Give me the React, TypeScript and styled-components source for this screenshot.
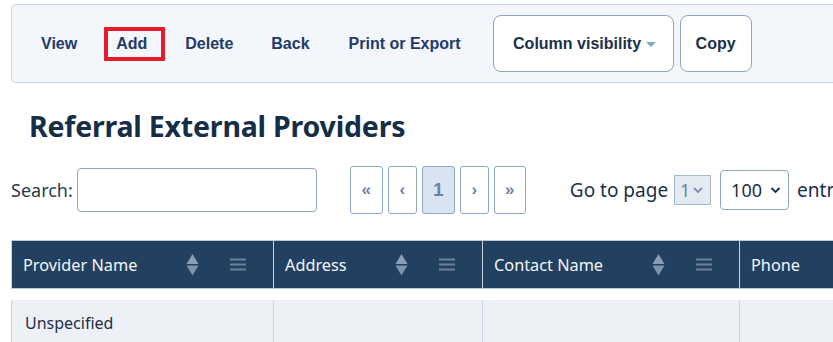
import React from "react";
import styled, { createGlobalStyle } from "styled-components";

const Global = createGlobalStyle`
  html, body { margin: 0; padding: 0; background: #ffffff; overflow: hidden; }
  body { font-family: "Noto Sans", "Open Sans", sans-serif; }
`;

const Page = styled.div`
  width: 833px;
  height: 342px;
  overflow: hidden;
  padding: 4px 0 0 11px;
  box-sizing: border-box;
`;

const Toolbar = styled.div`
  width: 860px;
  height: 79px;
  box-sizing: border-box;
  border: 1px solid #c9d6e6;
  border-radius: 5px;
  background: #f3f6fb;
  display: flex;
  align-items: center;
  padding-left: 10px;
`;

const ToolLink = styled.button<{ $boxed?: boolean }>`
  font-family: "Liberation Sans", Arial, sans-serif;
  font-weight: bold;
  font-size: 16px;
  color: #1f3a6a;
  background: transparent;
  border: ${(p) => (p.$boxed ? "4px solid #e21d25" : "none")};
  padding: ${(p) => (p.$boxed ? "4px 14px 4px 8px" : "8px 19px")};
  cursor: pointer;
  line-height: 18px;
  flex: none;
`;

const OutlineButton = styled.button<{ $w: number }>`
  font-family: "Liberation Sans", Arial, sans-serif;
  font-weight: bold;
  font-size: 16px;
  color: #1c2f4a;
  background: #ffffff;
  border: 1px solid #8fa5c0;
  border-radius: 8px;
  height: 57px;
  width: ${(p) => p.$w}px;
  display: flex;
  align-items: center;
  justify-content: center;
  gap: 5px;
  margin-right: 6px;
  padding: 0;
  flex: none;
`;

const Caret = styled.span`
  width: 0;
  height: 0;
  border-left: 5px solid transparent;
  border-right: 5px solid transparent;
  border-top: 5px solid #7fa8d0;
  margin-top: 1px;
  margin-right: -3px;
`;

const Spacer = styled.div<{ $w: number }>`
  width: ${(p) => p.$w}px;
  flex: none;
`;

const Title = styled.h1`
  margin: 0;
  padding: 23px 0 0 18px;
  font-family: "Noto Sans", sans-serif;
  font-weight: 700;
  font-size: 28.5px;
  color: #162d48;
  line-height: 40px;
  letter-spacing: -0.2px;
`;

const Controls = styled.div`
  display: flex;
  align-items: center;
  margin-top: 20px;
  height: 48px;
  white-space: nowrap;
  width: max-content;
`;

const Label = styled.span`
  font-family: "Noto Sans", sans-serif;
  font-size: 18px;
  color: #2b3a4e;
  flex: none;
`;

const SearchInput = styled.input`
  width: 240px;
  height: 44px;
  box-sizing: border-box;
  border: 1px solid #8ea6c2;
  border-radius: 4px;
  margin-left: 4px;
  background: #fff;
  flex: none;
`;

const Pager = styled.div`
  display: flex;
  gap: 5px;
  margin-left: 33px;
  flex: none;
`;

const PageBtn = styled.button<{ $w: number; $active?: boolean }>`
  width: ${(p) => p.$w}px;
  height: 48px;
  box-sizing: border-box;
  border: 1px solid #8fa7c4;
  border-radius: 3px;
  background: ${(p) => (p.$active ? "#d8e4f2" : "#ffffff")};
  color: #6b84a3;
  font-family: "Liberation Sans", Arial, sans-serif;
  font-weight: bold;
  font-size: ${(p) => (p.$active ? "19px" : "17px")};
  padding: 0;
  display: flex;
  align-items: center;
  justify-content: center;
`;

const GoLabel = styled(Label)`
  margin-left: 44px;
  font-size: 19px;
  color: #1c2f4a;
`;

const SmallSelect = styled.div`
  margin-left: 6px;
  width: 37px;
  height: 30px;
  box-sizing: border-box;
  background: #e4eaf2;
  border: 1px solid #a9b9cd;
  display: flex;
  align-items: center;
  padding-left: 5px;
  gap: 3px;
  font-family: "Noto Sans", sans-serif;
  font-size: 18px;
  color: #6b84a3;
  flex: none;
`;

const BigSelect = styled.div`
  margin-left: 9px;
  width: 69px;
  height: 40px;
  box-sizing: border-box;
  background: #fff;
  border: 1px solid #8fa5c0;
  border-radius: 4px;
  display: flex;
  align-items: center;
  padding-left: 10px;
  gap: 8px;
  font-family: "Noto Sans", sans-serif;
  font-size: 18px;
  color: #1c2f4a;
  flex: none;
`;

const EntLabel = styled(Label)`
  margin-left: 8px;
  font-size: 19px;
  color: #1c2f4a;
`;

const TableWrap = styled.div`
  margin-top: 26px;
  width: 900px;
`;

const Table = styled.table`
  border-collapse: separate;
  border-spacing: 0;
  table-layout: fixed;
  width: 900px;
`;

const Th = styled.th<{ $w: number }>`
  width: ${(p) => p.$w}px;
  height: 49px;
  box-sizing: border-box;
  background: #22405f;
  color: #f2f5f9;
  font-family: "Noto Sans", sans-serif;
  font-weight: 400;
  font-size: 16.3px;
  text-align: left;
  padding: 0 0 0 11px;
  border-top: 1px solid #b9c9dc;
  border-bottom: 1px solid #b9c9dc;
  border-left: 1px solid #c5d3e3;
`;

const ThInner = styled.div`
  display: flex;
  align-items: center;
  height: 100%;
`;

const ThText = styled.span`
  flex: 1;
  white-space: nowrap;
`;

const Icons = styled.span`
  display: flex;
  align-items: center;
  gap: 31px;
  margin-right: 27px;
`;

const GapRow = styled.tr`
  height: 11px;
`;

const Td = styled.td`
  height: 45px;
  background: #edf1f6;
  border-left: 1px solid #c8d6e8;
  padding: 0 0 0 13px;
  font-family: "Noto Sans", sans-serif;
  font-size: 16px;
  color: #1c2f4a;
  vertical-align: middle;
`;

const SortIcon = () => (
  <svg width="13" height="22" viewBox="0 0 13 22">
    <polygon points="6.5,0 12.5,10 0.5,10" fill="#8a9db4" />
    <rect x="0" y="10" width="13" height="1.2" fill="#22405f" />
    <polygon points="0.5,11.5 12.5,11.5 6.5,21.5" fill="#7f93ab" />
  </svg>
);

const MenuIcon = () => (
  <svg width="16" height="13" viewBox="0 0 16 13">
    <rect x="0" y="0.5" width="16" height="2" fill="#6d8099" />
    <rect x="0" y="5.5" width="16" height="2" fill="#6d8099" />
    <rect x="0" y="10.5" width="16" height="2" fill="#6d8099" />
  </svg>
);

const Chevron = ({ color, w = 10 }: { color: string; w?: number }) => (
  <svg width={w} height="7" viewBox="0 0 10 7">
    <polyline points="1,1 5,5 9,1" fill="none" stroke={color} strokeWidth="1.8" />
  </svg>
);

const columns = [
  { name: "Provider Name", w: 262, icons: true },
  { name: "Address", w: 209, icons: true },
  { name: "Contact Name", w: 257, icons: true },
  { name: "Phone", w: 172, icons: false },
];

export default function App() {
  return (
    <>
      <Global />
      <Page>
        <Toolbar>
          <ToolLink>View</ToolLink>
          <Spacer $w={8} />
          <ToolLink $boxed>Add</ToolLink>
          <Spacer $w={1} />
          <ToolLink>Delete</ToolLink>
          <ToolLink>Back</ToolLink>
          <Spacer $w={1} />
          <ToolLink>Print or Export</ToolLink>
          <Spacer $w={13} />
          <OutlineButton $w={181}>
            Column visibility <Caret />
          </OutlineButton>
          <OutlineButton $w={72}>Copy</OutlineButton>
        </Toolbar>
        <Title>Referral External Providers</Title>
        <Controls>
          <Label>Search:</Label>
          <SearchInput />
          <Pager>
            <PageBtn $w={33}>«</PageBtn>
            <PageBtn $w={29}>‹</PageBtn>
            <PageBtn $w={33} $active>1</PageBtn>
            <PageBtn $w={29}>›</PageBtn>
            <PageBtn $w={32}>»</PageBtn>
          </Pager>
          <GoLabel>Go to page</GoLabel>
          <SmallSelect>
            1 <Chevron color="#7a8ea8" />
          </SmallSelect>
          <BigSelect>
            100 <Chevron color="#1c2f4a" w={11} />
          </BigSelect>
          <EntLabel>entries</EntLabel>
        </Controls>
        <TableWrap>
          <Table>
            <thead>
              <tr>
                {columns.map((c) => (
                  <Th key={c.name} $w={c.w}>
                    <ThInner>
                      <ThText>{c.name}</ThText>
                      {c.icons && (
                        <Icons>
                          <SortIcon />
                          <MenuIcon />
                        </Icons>
                      )}
                    </ThInner>
                  </Th>
                ))}
              </tr>
            </thead>
            <tbody>
              <GapRow>
                <td colSpan={4} />
              </GapRow>
              <tr>
                <Td>Unspecified</Td>
                <Td />
                <Td />
                <Td />
              </tr>
            </tbody>
          </Table>
        </TableWrap>
      </Page>
    </>
  );
}
